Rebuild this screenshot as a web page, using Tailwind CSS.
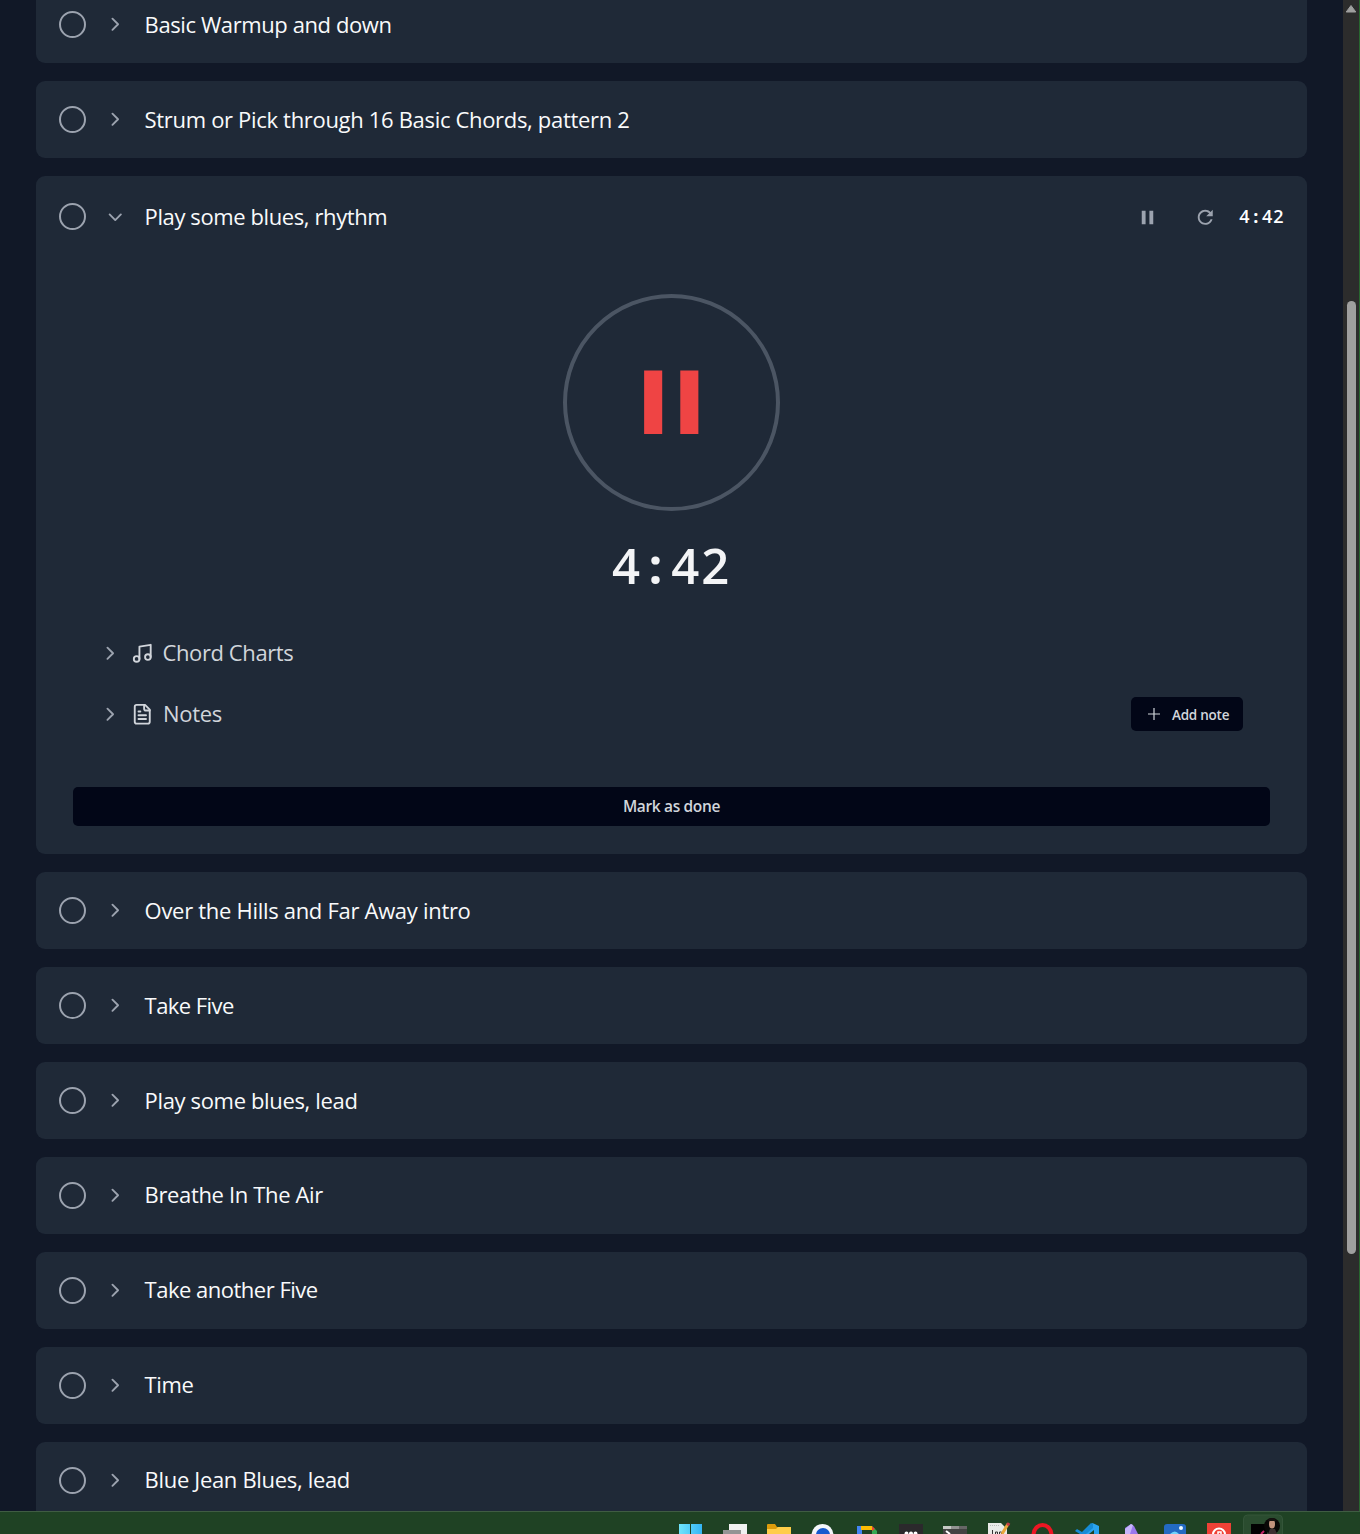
<!DOCTYPE html>
<html lang="en">
<head>
<meta charset="utf-8">
<title>Practice session</title>
<script src="https://cdn.jsdelivr.net/npm/@tailwindcss/browser@4"></script>
</head>
<body class="h-[1534px] overflow-hidden bg-[#111827] font-['Open_Sans','Noto_Sans',sans-serif]">
<svg class="hidden">
  <symbol id="right" viewBox="0 0 24 24"><path d="m9 18 6-6-6-6" fill="none" stroke="currentColor" stroke-width="2" stroke-linecap="round" stroke-linejoin="round"/></symbol>
  <symbol id="down" viewBox="0 0 24 24"><path d="m6 9 6 6 6-6" fill="none" stroke="currentColor" stroke-width="2" stroke-linecap="round" stroke-linejoin="round"/></symbol>
  <symbol id="pause" viewBox="0 0 24 24"><path d="M6 19h4V5H6zM14 5v14h4V5z" fill="currentColor"/></symbol>
</svg>
<div class="flex h-full flex-col">
  <div class="flex h-[1511px] overflow-hidden">
    <main class="-mt-[14px] flex w-[1343px] shrink-0 flex-col gap-[18px] pl-9 pr-9 text-[22px] tracking-[-0.35px] text-gray-50">
      <div class="flex h-[77px] shrink-0 items-center gap-[18px] rounded-[9px] bg-[#1f2937] pl-[22.5px]"><span class="size-[27px] rounded-full border-2 border-[#9ca3af]"></span><svg class="size-[22.5px] text-[#9ca3af]"><use href="#right"/></svg><span class="ml-[0.6px] tracking-[-0.4px]">Basic Warmup and down</span></div>
      <div class="flex h-[77px] shrink-0 items-center gap-[18px] rounded-[9px] bg-[#1f2937] pl-[22.5px]"><span class="size-[27px] rounded-full border-2 border-[#9ca3af]"></span><svg class="size-[22.5px] text-[#9ca3af]"><use href="#right"/></svg><span class="ml-[0.6px] tracking-[-0.32px]">Strum or Pick through 16 Basic Chords, pattern 2</span></div>

      <section class="flex h-[678px] shrink-0 flex-col rounded-[9px] bg-[#1f2937]">
        <header class="flex h-[81px] items-center gap-[18px] pl-[22.5px] pr-[22.5px]">
          <span class="size-[27px] rounded-full border-2 border-[#9ca3af]"></span><svg class="mt-px size-[22.5px] text-[#9ca3af]"><use href="#down"/></svg><span class="ml-[0.6px] tracking-[-0.4px]">Play some blues, rhythm</span>
          <div class="ml-auto flex items-center text-[#9ca3af]">
            <svg class="mt-px mr-[35px] size-[23px]"><use href="#pause"/></svg>
            <svg class="mt-px mr-[22.5px] size-[22.5px]" viewBox="0 0 24 24" fill="currentColor"><path d="M17.65 6.35C16.2 4.9 14.21 4 12 4c-4.42 0-7.99 3.58-7.99 8s3.57 8 7.99 8c3.73 0 6.84-2.55 7.73-6h-2.08c-.82 2.33-3.04 4-5.65 4-3.31 0-6-2.69-6-6s2.69-6 6-6c1.66 0 3.14.69 4.22 1.78L13 11h7V4l-2.35 2.35z"/></svg>
            <span class="text-[18px] font-semibold tracking-[0.9px] text-white">4<span class="px-[2.8px] font-bold">:</span>42</span>
          </div>
        </header>
        <div class="flex flex-col items-center pt-[37px]">
          <div class="flex size-[217px] items-center justify-center rounded-full border-4 border-[#4b5563] text-[#ef4444]"><svg class="mr-[0.5px] mb-[0.5px] size-[108.5px]"><use href="#pause"/></svg></div>
          <div class="mt-[20px] flex h-[70px] items-center text-[49px] font-semibold tracking-[1.9px] text-gray-100"><span>4<span class="px-[6.8px] font-bold">:</span>42</span></div>
        </div>
        <div class="mt-[29px] flex h-[46px] items-center pl-[62.5px] text-[#d1d5db]">
          <svg class="mr-[10px] size-[22.5px] text-[#9ca3af]"><use href="#right"/></svg>
          <svg class="mr-[9px] size-[22.5px]" viewBox="0 0 24 24" fill="none" stroke="currentColor" stroke-width="2" stroke-linecap="round" stroke-linejoin="round"><path d="M9 18V5l12-2v13"/><circle cx="6" cy="18" r="3"/><circle cx="18" cy="16" r="3"/></svg>
          <span class="mb-[2px] tracking-[-0.4px]">Chord Charts</span>
        </div>
        <div class="mt-[15px] flex h-[46px] items-center pl-[62.5px] pr-16 text-[#d1d5db]">
          <svg class="mr-[10px] size-[22.5px] text-[#9ca3af]"><use href="#right"/></svg>
          <svg class="mr-[9px] size-[22.5px]" viewBox="0 0 24 24" fill="none" stroke="currentColor" stroke-width="2" stroke-linecap="round" stroke-linejoin="round"><path d="M15 2H6a2 2 0 0 0-2 2v16a2 2 0 0 0 2 2h12a2 2 0 0 0 2-2V7z"/><path d="M14 2v4a2 2 0 0 0 2 2h4M10 9H8M16 13H8M16 17H8"/></svg>
          <span class="mb-[2px] ml-[0.6px]">Notes</span>
          <button class="ml-auto flex h-[34px] w-[112px] items-center rounded-[5px] bg-[#020617] pl-[14px] text-[13.5px] font-semibold tracking-[-0.25px]"><svg class="mr-[9px] size-[18px]" viewBox="0 0 24 24" fill="none" stroke="currentColor" stroke-width="1.6"><path d="M4 12h16M12 4v16"/></svg><span class="mt-[2px]">Add note</span></button>
        </div>
        <button class="mx-[37px] mt-[50px] h-[39px] rounded-[5px] bg-[#020617] text-[15.5px] font-semibold tracking-[-0.35px] text-[#d1d5db]">Mark as done</button>
      </section>

      <div class="flex h-[77px] shrink-0 items-center gap-[18px] rounded-[9px] bg-[#1f2937] pl-[22.5px]"><span class="size-[27px] rounded-full border-2 border-[#9ca3af]"></span><svg class="size-[22.5px] text-[#9ca3af]"><use href="#right"/></svg><span class="ml-[0.6px] tracking-[-0.3px]">Over the Hills and Far Away intro</span></div>
      <div class="flex h-[77px] shrink-0 items-center gap-[18px] rounded-[9px] bg-[#1f2937] pl-[22.5px]"><span class="size-[27px] rounded-full border-2 border-[#9ca3af]"></span><svg class="size-[22.5px] text-[#9ca3af]"><use href="#right"/></svg><span class="ml-[0.6px] tracking-[-0.55px]">Take Five</span></div>
      <div class="flex h-[77px] shrink-0 items-center gap-[18px] rounded-[9px] bg-[#1f2937] pl-[22.5px]"><span class="size-[27px] rounded-full border-2 border-[#9ca3af]"></span><svg class="size-[22.5px] text-[#9ca3af]"><use href="#right"/></svg><span class="ml-[0.6px]">Play some blues, lead</span></div>
      <div class="flex h-[77px] shrink-0 items-center gap-[18px] rounded-[9px] bg-[#1f2937] pl-[22.5px]"><span class="size-[27px] rounded-full border-2 border-[#9ca3af]"></span><svg class="size-[22.5px] text-[#9ca3af]"><use href="#right"/></svg><span class="mb-[2px] ml-[0.6px]">Breathe In The Air</span></div>
      <div class="flex h-[77px] shrink-0 items-center gap-[18px] rounded-[9px] bg-[#1f2937] pl-[22.5px]"><span class="size-[27px] rounded-full border-2 border-[#9ca3af]"></span><svg class="size-[22.5px] text-[#9ca3af]"><use href="#right"/></svg><span class="mb-[2px] ml-[0.6px] tracking-[-0.5px]">Take another Five</span></div>
      <div class="flex h-[77px] shrink-0 items-center gap-[18px] rounded-[9px] bg-[#1f2937] pl-[22.5px]"><span class="size-[27px] rounded-full border-2 border-[#9ca3af]"></span><svg class="size-[22.5px] text-[#9ca3af]"><use href="#right"/></svg><span class="mb-[2px] ml-[0.6px]">Time</span></div>
      <div class="flex h-[77px] shrink-0 items-center gap-[18px] rounded-[9px] bg-[#1f2937] pl-[22.5px]"><span class="size-[27px] rounded-full border-2 border-[#9ca3af]"></span><svg class="size-[22.5px] text-[#9ca3af]"><use href="#right"/></svg><span class="mb-[2px] ml-[0.6px] tracking-[-0.32px]">Blue Jean Blues, lead</span></div>
    </main>
    <div class="flex w-[17px] flex-col items-center border-r border-[#28662f] bg-[#2c2c2c]">
      <svg class="mt-[4px] h-[10px] w-[12px]" viewBox="0 0 12 10"><path d="M6 1.5 10.8 8H1.2z" fill="#9f9f9f" stroke="#9f9f9f" stroke-linejoin="round"/></svg>
      <div class="mt-[287px] h-[953px] w-[9px] rounded-full bg-[#9f9f9f]"></div>
    </div>
  </div>
  <footer class="flex h-[23px] border-t border-[#3f5c43] bg-[#1f4224] pl-[668px]">
    <svg class="h-[22px] w-11 shrink-0" viewBox="0 0 44 22"><defs><linearGradient id="win" x1="0" x2="1"><stop stop-color="#6fe4fb"/><stop offset="1" stop-color="#35b5f5"/></linearGradient></defs><path d="M11 12h11v10H11zM23 12h11v10H23z" fill="url(#win)"/></svg>
    <svg class="h-[22px] w-11 shrink-0" viewBox="0 0 44 22"><path d="M17 12h18v10H17z" fill="#f1f1f1"/><path d="M11 18h18v4H11z" fill="#949494"/></svg>
    <svg class="h-[22px] w-11 shrink-0" viewBox="0 0 44 22"><path d="M11 22v-9q0-1 1-1h7l2 3h14v7z" fill="#dc9b0b"/><path d="M11 17h9l2-2h13v7H11z" fill="#ffcd49"/></svg>
    <svg class="h-[22px] w-11 shrink-0" viewBox="0 0 44 22"><circle cx="22.500" cy="23" r="11" fill="#f4f6fa"/><circle cx="23" cy="23" r="7" fill="#1559ce"/></svg>
    <svg class="h-[22px] w-11 shrink-0" viewBox="0 0 44 22"><path d="M13 14h5v8h-5z" fill="#4285f4"/><path d="M17 14h11v4H17z" fill="#fbbc04"/><path d="M28 14l5 5v3h-5z" fill="#34a853"/><path d="M28 14l3 3-3 2z" fill="#ea4335"/></svg>
    <svg class="h-[22px] w-11 shrink-0" viewBox="0 0 44 22"><path d="M11 12h24v10H11z" fill="#2b292c"/><g fill="#fff"><circle cx="18.500" cy="21.500" r="2"/><circle cx="23" cy="21.500" r="2"/><circle cx="27.500" cy="21.500" r="2"/></g></svg>
    <svg class="h-[22px] w-11 shrink-0" viewBox="0 0 44 22"><path d="M11 14h24v8H11z" fill="#434343"/><path d="M11 14h8v3h-8z" fill="#c5c9c5"/><path d="M19 14h8v3h-8z" fill="#929292"/><path d="M27 14h8v3h-8z" fill="#666"/><path d="m14 19 4 3" stroke="#fff" stroke-width="2"/></svg>
    <svg class="h-[22px] w-11 shrink-0" viewBox="0 0 44 22"><path d="M12 11h13l4 4h2v7H12z" fill="#e9ebe8"/><path d="M14 13.500h10" stroke="#bbb" stroke-dasharray="1"/><path d="M16.500 22v-4m3 4v-2h2v2m2 0v-2h2v2" stroke="#333" fill="none"/><path d="m32 12-6 10" stroke="#e9a73a" stroke-width="3"/><path d="m33 11-1.500 2.500" stroke="#c43a45" stroke-width="3"/></svg>
    <svg class="h-[22px] w-11 shrink-0" viewBox="0 0 44 22"><ellipse cx="22.500" cy="23" rx="9" ry="10" fill="none" stroke="#ed1623" stroke-width="4"/></svg>
    <svg class="h-[22px] w-11 shrink-0" viewBox="0 0 44 22"><path d="M28.500 11 35 14v8h-5v-4l-5 4h-5z" fill="#2aa3ef"/><path d="m11 19 2-2 5 3 9-9 2 1v4l-7 6h-6z" fill="#168bd6"/></svg>
    <svg class="h-[22px] w-11 shrink-0" viewBox="0 0 44 22"><path d="m17 16 6-4 3 2 4 8H17z" fill="#9a78ed"/><path d="m23 12 2 1-3 9h-5v-5z" fill="#c6b5fa"/></svg>
    <svg class="h-[22px] w-11 shrink-0" viewBox="0 0 44 22"><path d="M12 22v-7q0-3 3-3h16q3 0 3 3v7z" fill="#236ac3"/><circle cx="29" cy="16" r="2" fill="#eefaff"/><path d="M18 22q5-5 9 0" fill="#70d3fa"/></svg>
    <svg class="h-[22px] w-11 shrink-0" viewBox="0 0 44 22"><path d="M11 11h24v11H11z" fill="#ef4136"/><circle cx="23" cy="22.500" r="6" fill="none" stroke="#fff" stroke-width="2"/><path d="M22 22v-2h3v2" fill="none" stroke="#fff" stroke-width="1.500"/></svg>
    <svg class="h-[22px] w-11 shrink-0" viewBox="0 0 44 22"><path d="M3.500 22V7q0-4 4-4h31q4 0 4 4v15" fill="#2a4c2f" stroke="#345539"/><path d="M11 12h16v10H11z" fill="#020202"/><circle cx="32" cy="14" r="8" fill="#090807"/><ellipse cx="32" cy="12" rx="3" ry="4.500" fill="#c2937d"/><path d="M28 9q0-3 4-3t4 3z" fill="#171210"/><path d="m28 22 2-5h5l2 5z" fill="#3b3030"/><path d="m21 22 3-3" stroke="#c62367" stroke-width="2"/></svg>
  </footer>
</div>
</body>
</html>
